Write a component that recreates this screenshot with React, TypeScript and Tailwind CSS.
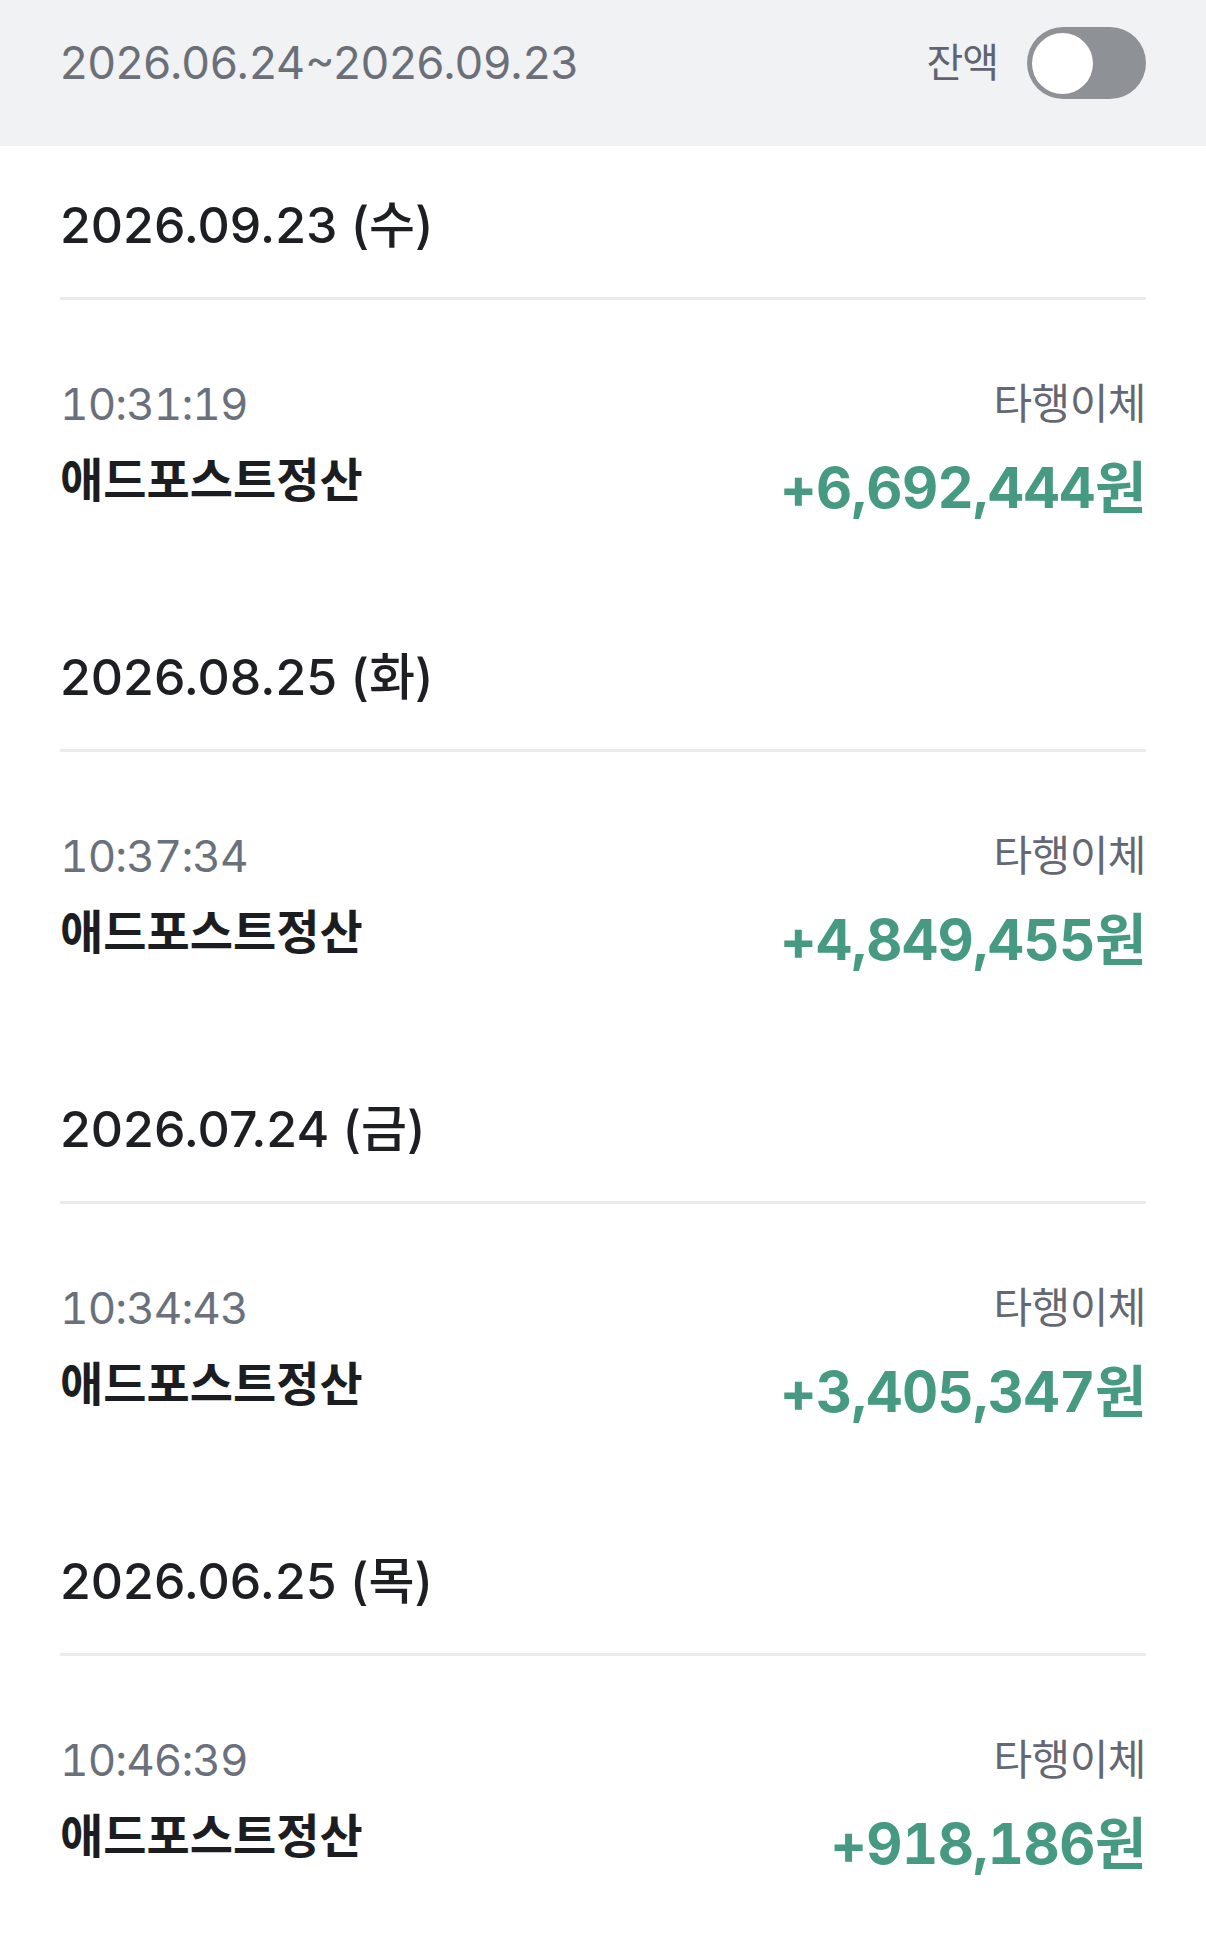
import React from 'react';

type Tx = {
  date: string;
  day: string;
  time: string;
  kind: string;
  name: string;
  amount: string;
};

const transactions: Tx[] = [
  { date: '2026.09.23', day: '수', time: '10:31:19', kind: '타행이체', name: '애드포스트정산', amount: '+6,692,444원' },
  { date: '2026.08.25', day: '화', time: '10:37:34', kind: '타행이체', name: '애드포스트정산', amount: '+4,849,455원' },
  { date: '2026.07.24', day: '금', time: '10:34:43', kind: '타행이체', name: '애드포스트정산', amount: '+3,405,347원' },
  { date: '2026.06.25', day: '목', time: '10:46:39', kind: '타행이체', name: '애드포스트정산', amount: '+918,186원' },
];

const Toggle: React.FC<{ on?: boolean }> = ({ on = false }) => (
  <div
    className={`flex h-[72px] w-[119px] items-center rounded-full px-[5px] ${
      on ? 'justify-end bg-[#479a82]' : 'justify-start bg-[#8e9196]'
    }`}
  >
    <span className="h-[61px] w-[61px] rounded-full bg-white" />
  </div>
);

const Section: React.FC<{ tx: Tx }> = ({ tx }) => (
  <section>
    {/* 날짜 헤더 */}
    <div className="flex h-[151px] items-center px-[60px] pt-[7px]">
      <h2 className="text-[50px] font-medium leading-none text-[#1d1f23]">
        {tx.date} ({tx.day})
      </h2>
    </div>
    <div className="mx-[60px] h-[3px] bg-[#ebebeb]" />

    {/* 거래 내역 */}
    <div className="h-[298px] px-[60px] pt-[76px]">
      <div className="flex items-center justify-between leading-[56px]">
        <span className="text-[44px] tracking-[-0.9px] tabular-nums text-[#6b717c]">{tx.time}</span>
        <span className="text-[42px] tracking-[-0.5px] text-[#646872]">{tx.kind}</span>
      </div>
      <div className="mt-[16px] flex items-start justify-between">
        <span className="text-[47px] font-bold leading-[64px] text-[#1c1d21]">{tx.name}</span>
        <span className="mt-[8px] text-[56px] font-bold leading-[64px] tracking-[-0.5px] tabular-nums text-[#479a82]">
          {tx.amount}
        </span>
      </div>
    </div>
  </section>
);

export default function App() {
  return (
    <div
      className="min-h-[1954px] w-full bg-white"
      style={{ fontFamily: 'Inter, "Noto Sans CJK KR", "Noto Sans", sans-serif' }}
    >
      <header className="h-[146px] bg-[#f1f2f4] px-[60px] pt-[27px]">
        <div className="flex h-[72px] items-center justify-between">
          <span className="text-[45px] text-[#6b6f78]">2026.06.24~2026.09.23</span>
          <div className="flex items-center gap-[29px]">
            <span className="text-[40px] tracking-[-1px] text-[#5f6470]">잔액</span>
            <Toggle />
          </div>
        </div>
      </header>

      {transactions.map((tx) => (
        <Section key={tx.date} tx={tx} />
      ))}
    </div>
  );
}
